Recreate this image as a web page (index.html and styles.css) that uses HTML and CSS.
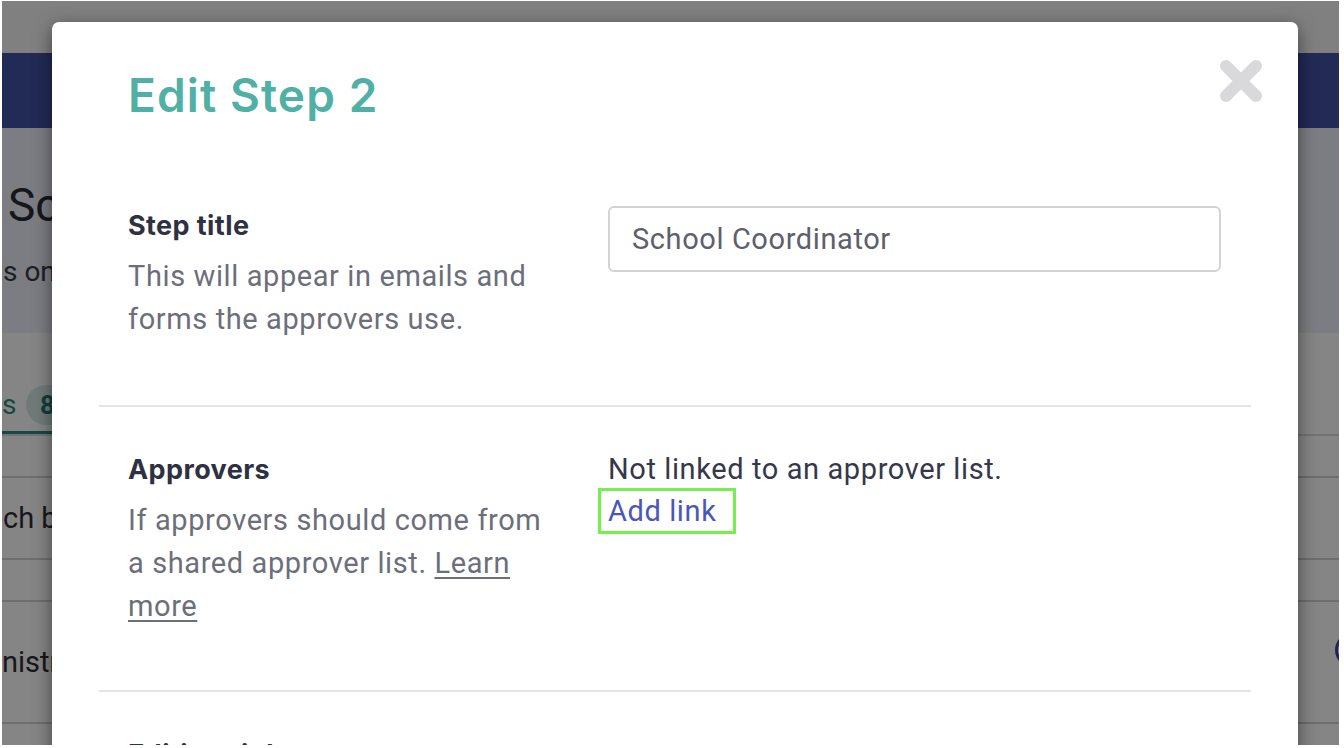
FILE: index.html
```html
<!DOCTYPE html>
<html lang="en">
<head>
<meta charset="utf-8">
<title>Edit Step 2</title>
<link rel="stylesheet" href="styles.css">
</head>
<body>
<div class="screen">
  <div class="page">
    <div class="topbar"></div>
    <div class="navband"></div>
    <div class="pagehead">
      <div class="pagetitle">School Approvals</div>
      <div class="pagesub">s on this page</div>
    </div>
    <div class="pagebody">
      <div class="tabs"><span class="tab">s</span><span class="pill">8</span></div>
      <div class="bgrow r1"></div>
      <div class="bgrow r2"><span>ch by name</span></div>
      <div class="bgrow r3"></div>
      <div class="bgrow r4"><span>nistrator</span><span class="circlebtn"></span></div>
      <div class="bgrow r5"></div>
    </div>
  </div>
  <div class="overlay"></div>
  <div class="modal">
    <div class="modal-header">
      <h1 class="modal-title">Edit Step 2</h1>
      <button class="close" aria-label="Close">
        <svg width="46" height="46" viewBox="0 0 46 46"><path d="M8 8 L38 38 M38 8 L8 38" stroke="#d9d9db" stroke-width="12" stroke-linecap="round" fill="none"/></svg>
      </button>
    </div>
    <div class="section">
      <div class="col-left">
        <div class="label">Step title</div>
        <p class="desc">This will appear in emails and forms the approvers use.</p>
      </div>
      <div class="col-right">
        <div class="input">School Coordinator</div>
      </div>
    </div>
    <div class="section">
      <div class="col-left">
        <div class="label">Approvers</div>
        <p class="desc">If approvers should come from a shared approver list. <a class="learn" href="#">Learn more</a></p>
      </div>
      <div class="col-right">
        <div class="status">Not linked to an approver list.</div>
        <a class="addlink" href="#">Add link</a>
      </div>
    </div>
    <div class="section">
      <div class="col-left">
        <div class="label">Editing rights</div>
      </div>
    </div>
  </div>
</div>
</body>
</html>
```

FILE: styles.css
```css
* { box-sizing: border-box; }
html, body { margin: 0; padding: 0; background: #ffffff; }
body { font-family: Roboto, "Liberation Sans", Arial, sans-serif; }

.screen {
  position: relative;
  width: 1337px;
  height: 744px;
  margin: 1px 0 0 2px;
  overflow: hidden;
}

/* underlying page */
.page { width: 100%; height: 100%; background: #fff; }
.topbar { height: 52px; background: #f6f6f6; }
.navband { height: 75px; background: #4252a5; }
.pagehead { height: 205px; background: #eef0fa; padding: 50px 0 0 6px; }
.pagetitle { font-size: 46px; line-height: 54px; color: #2b2c33; }
.pagesub { font-size: 28px; line-height: 40px; color: #3a3b44; margin: 20px 0 0 -5px; }
.pagebody { background: #fff; }
.tabs { height: 103px; border-bottom: 2px solid #dcdde2; padding: 46px 0 0 0; display: flex; align-items: flex-start; }
.tab { color: #2a8c7e; font-size: 28px; line-height: 52px; border-bottom: 3px solid #2a8c7e; width: 60px; margin-right: -60px; }
.pill { margin-left: 24px; background: #d7ece8; color: #207a6e; border-radius: 20px; font-weight: 700; font-size: 26px; line-height: 40px; padding: 0 14px; margin-top: 6px; }
.bgrow { border-bottom: 2px solid #d2d3d8; font-size: 29px; color: #2e2f36; display: flex; align-items: center; justify-content: space-between; }
.r1 { height: 42px; }
.r2 { height: 82px; }
.r2 span { margin-left: 1px; }
.r3 { height: 42px; }
.r4 { height: 122px; }
.r5 { height: 60px; }
.circlebtn { width: 34px; height: 34px; border: 3px solid #3d4aa8; border-radius: 50%; margin-right: -30px; margin-top: -24px; }

.overlay { position: absolute; inset: 0; background: rgba(0, 0, 0, 0.48); }

/* modal */
.modal {
  position: absolute;
  left: 50px;
  top: 21px;
  width: 1246px;
  height: 800px;
  background: #fff;
  border-radius: 7px;
  box-shadow: 0 5px 18px rgba(0, 0, 0, 0.5);
}
.modal-header {
  display: flex;
  justify-content: space-between;
  align-items: flex-start;
  padding: 36px 34px 0 76px;
  margin-bottom: 83px;
}
.modal-title {
  margin: 9px 0 0 0;
  font-family: Inter, "Open Sans", sans-serif;
  font-weight: 600;
  font-size: 46px;
  line-height: 56px;
  letter-spacing: 1.1px;
  color: #50b0a5;
}
.close { border: 0; background: none; padding: 0; width: 46px; height: 46px; display: block; cursor: pointer; }
.close svg { display: block; }

.section {
  margin: 0 47px;
  padding: 0 30px 64px 29px;
  border-bottom: 2px solid #e4e4e6;
  display: grid;
  grid-template-columns: 420px 1fr;
  column-gap: 60px;
}
.section + .section { padding-top: 43px; padding-bottom: 62px; }
.label {
  font-family: Inter, Roboto, sans-serif;
  font-weight: 700;
  font-size: 27px;
  line-height: 40px;
  letter-spacing: 0.4px;
  color: #2e3142;
}
.desc {
  margin: 9px 0 0 0;
  font-size: 29px;
  line-height: 43px;
  letter-spacing: 0.6px;
  color: #6c6f7b;
}
.learn { color: #6c6f7b; text-decoration: underline; text-underline-offset: 4px; text-decoration-thickness: 2px; }
.input {
  height: 66px;
  border: 2px solid #d3d3d6;
  border-radius: 6px;
  padding: 0 22px;
  display: flex;
  align-items: center;
  font-size: 29px;
  letter-spacing: 0.6px;
  color: #5d606c;
}
.status { font-size: 29px; line-height: 43px; letter-spacing: 0.6px; color: #35384a; margin-top: -2px; }
.addlink {
  display: inline-block;
  margin: -3px 0 0 -10px;
  padding: 0 17px 0 7px;
  border: 3px solid #74ef4b;
  font-size: 29px;
  line-height: 40px;
  letter-spacing: 0.6px;
  color: #4a57b8;
  text-decoration: none;
}
```
